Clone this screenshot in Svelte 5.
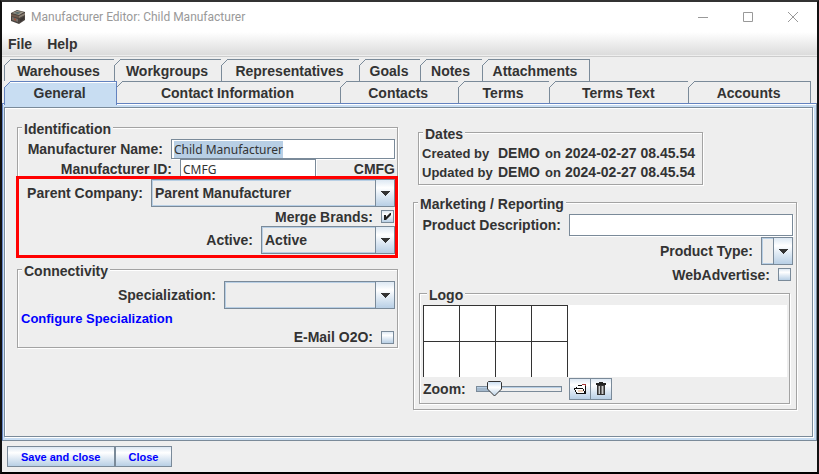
<script lang="ts">
	import { onMount } from 'svelte';

	// Tab rows, sized like the native tabbed pane
	const backTabs = [
		{ label: 'Warehouses', size: 111 },
		{ label: 'Workgroups', size: 107 },
		{ label: 'Representatives', size: 138 },
		{ label: 'Goals', size: 61 },
		{ label: 'Notes', size: 62 },
		{ label: 'Attachments', size: 107 }
	];

	const frontTabs = [
		{ label: 'General', size: 112 },
		{ label: 'Contact Information', size: 226 },
		{ label: 'Contacts', size: 118 },
		{ label: 'Terms', size: 91 },
		{ label: 'Terms Text', size: 139 },
		{ label: 'Accounts', size: 122 }
	];

	const dates = [
		{ action: 'Created by', user: 'DEMO', time: '2024-02-27 08.45.54' },
		{ action: 'Updated by', user: 'DEMO', time: '2024-02-27 08.45.54' }
	];

	let activeTab = $state('General');
	let name = $state('Child Manufacturer');
	let id = $state('CMFG');
	let mergeBrands = $state(true);
	let email = $state(false);
	let webAdvertise = $state(false);
	let description = $state('');
	let zoom = $state(14);
	let nameInput: HTMLInputElement;

	onMount(() => {
		nameInput.focus();
		nameInput.select();
	});
</script>

{#snippet arrow()}
	<span class="arrow">
		<svg width="10" height="5" viewBox="0 0 10 5" shape-rendering="crispEdges"><path d="M0 0H10L5 5Z" fill="#333" /></svg>
	</span>
{/snippet}

<div class="window">
	<header class="titlebar">
		<svg class="app-icon" width="16" height="16" viewBox="0 0 16 16">
			<path d="M1 4L7 1L15 3V11L9 15L1 12Z" fill="#4a4440" />
			<path d="M2 4L7 2L14 3L9 6Z" fill="#a39c8d" />
			<path d="M4 4L7 3L11 3.500L8 5Z" fill="#55696b" />
			<path d="M1 5L9 7V9L1 7Z" fill="#6e5a4c" />
			<path d="M9 7L15 4V6L9 9Z" fill="#8b8175" />
			<path d="M2 8L8 10V13L2 11Z" fill="#756e67" />
			<path d="M10 10L14 8V10L10 13Z" fill="#3b3532" />
			<path d="M4 9L6 10V12L4 11Z" fill="#9b4f3a" />
		</svg>
		<span class="title">Manufacturer Editor: Child Manufacturer</span>
		<div class="window-buttons">
			<button aria-label="Minimize"><svg width="10" height="10" viewBox="0 0 10 10"><path d="M0 5.500H10" /></svg></button>
			<button aria-label="Maximize"><svg width="10" height="10" viewBox="0 0 10 10"><path d="M.5 .5H9.500V9.500H.5Z" /></svg></button>
			<button aria-label="Close window"><svg width="10" height="10" viewBox="0 0 10 10"><path d="M0 0L10 10M10 0L0 10" /></svg></button>
		</div>
	</header>

	<nav class="menubar">
		<button>File</button>
		<button>Help</button>
	</nav>

	<div class="tabs" role="tablist">
		<div class="tab-row">
			{#each backTabs as tab}
				<button class="tab" role="tab" aria-selected={activeTab === tab.label} class:selected={activeTab === tab.label} style="flex-basis: {tab.size}px" onclick={() => (activeTab = tab.label)}>{tab.label}</button>
			{/each}
		</div>
		<div class="tab-row front">
			{#each frontTabs as tab}
				<button class="tab" role="tab" aria-selected={activeTab === tab.label} class:selected={activeTab === tab.label} style="flex-grow: {tab.size}" onclick={() => (activeTab = tab.label)}>{tab.label}</button>
			{/each}
		</div>
	</div>

	<main class="pane">
		<div class="page">
			<div class="column">
				<fieldset>
					<legend>Identification</legend>
					<div class="row name">
						<label for="name">Manufacturer Name:</label>
						<input id="name" type="text" bind:value={name} bind:this={nameInput} />
					</div>
					<div class="row ident">
						<label for="ident">Manufacturer ID:</label>
						<input id="ident" type="text" bind:value={id} />
						<output for="ident">{id}</output>
					</div>
					<div class="highlight">
						<div class="row parent">
							<label for="parent">Parent Company:</label>
							<div class="combo">
								<select id="parent"><option>Parent Manufacturer</option></select>
								{@render arrow()}
							</div>
						</div>
						<div class="row check">
							<label for="merge">Merge Brands:</label>
							<input id="merge" type="checkbox" bind:checked={mergeBrands} />
						</div>
						<div class="row active">
							<label for="active">Active:</label>
							<div class="combo">
								<select id="active"><option>Active</option><option>Inactive</option></select>
								{@render arrow()}
							</div>
						</div>
					</div>
				</fieldset>

				<fieldset class="connectivity">
					<legend>Connectivity</legend>
					<div class="row special">
						<label for="special">Specialization:</label>
						<div class="combo">
							<select id="special"><option></option></select>
							{@render arrow()}
						</div>
					</div>
					<a class="configure" href="#specialization">Configure Specialization</a>
					<div class="row check">
						<label for="email">E-Mail O2O:</label>
						<input id="email" type="checkbox" bind:checked={email} />
					</div>
				</fieldset>
			</div>

			<div class="column">
				<fieldset class="dates">
					<legend>Dates</legend>
					{#each dates as date}
						<div class="date">
							<small>{date.action}</small>
							<span>{date.user}</span>
							<small>on</small>
							<time>{date.time}</time>
						</div>
					{/each}
				</fieldset>

				<fieldset class="marketing">
					<legend>Marketing / Reporting</legend>
					<div class="row description">
						<label for="description">Product Description:</label>
						<input id="description" type="text" bind:value={description} />
					</div>
					<div class="row type">
						<label for="type">Product Type:</label>
						<div class="combo small">
							<select id="type"><option></option></select>
							{@render arrow()}
						</div>
					</div>
					<div class="row check">
						<label for="web">WebAdvertise:</label>
						<input id="web" type="checkbox" bind:checked={webAdvertise} />
					</div>

					<fieldset class="logo">
						<legend>Logo</legend>
						<div class="canvas"><div class="grid"></div></div>
						<div class="tools">
							<label for="zoom">Zoom:</label>
							<input id="zoom" type="range" min="0" max="100" bind:value={zoom} style="--fill: {zoom}%" />
							<div class="tool-buttons">
								<button aria-label="Open logo">
									<svg width="15" height="12" viewBox="0 0 15 12" shape-rendering="crispEdges">
										<path d="M4 2H12V9H4Z" fill="#fff" />
										<path d="M1 5H10L12 10H4Z" fill="#fff" />
										<path d="M5 7H10V9H5Z" fill="#f1d5bd" />
										<path d="M3 4H4V3H5V2H9V3H4V5H3Z" fill="#111" />
										<path d="M1 5H10V6H1ZM1 6H2V7H1ZM2 7H3V9H2ZM3 9H4V10H3ZM3 10H13V11H3ZM10 6H11V8H10ZM11 8H12V10H11ZM12 3H13V11H12Z" fill="#111" />
										<path d="M9 1H13V2H9ZM12 2H13V3H12Z" fill="#a33a3a" />
									</svg>
								</button>
								<button aria-label="Delete logo">
									<svg width="12" height="14" viewBox="0 0 12 14" shape-rendering="crispEdges">
										<path d="M4 0H8V1H11V3H1V1H4Z" fill="#222" />
										<path d="M2 3H10V13H2Z" fill="#333" />
										<path d="M3 4H9V12H3Z" fill="#777" />
										<path d="M4 4H5V12H4ZM7 4H8V12H7Z" fill="#ccc" />
										<path d="M5 4H6V12H5Z" fill="#333" />
									</svg>
								</button>
							</div>
						</div>
					</fieldset>
				</fieldset>
			</div>
		</div>
	</main>

	<footer>
		<button>Save and close</button>
		<button>Close</button>
	</footer>
</div>

<style>
	:global(body) {
		margin: 0;
	}

	.window {
		--line: #7a8a99;
		--metal: linear-gradient(#dde8f3 0%, #fff 30%, #e4edf6 55%, #b8cfe5 100%);
		box-sizing: border-box;
		min-height: 100vh;
		display: flex;
		flex-direction: column;
		background: #eee;
		border: 2px solid #000;
		border-color: #333 #111 #000 #111;
		color: #333;
		font: bold 14px/16px 'Liberation Sans', Arial, sans-serif;
	}

	button,
	input,
	select {
		box-sizing: border-box;
		margin: 0;
		font: inherit;
		color: inherit;
		border-radius: 0;
	}

	/* Title bar and menu */
	.titlebar {
		display: flex;
		align-items: center;
		height: 30px;
		padding: 0 2px 0 8px;
		background: #fff;
	}

	.title {
		flex: 1;
		margin-left: 5px;
		color: #999;
		font: 12px/16px Roboto, sans-serif;
	}

	.window-buttons {
		display: flex;
	}

	.window-buttons button {
		display: flex;
		align-items: center;
		justify-content: center;
		width: 45px;
		height: 28px;
		padding: 0;
		border: none;
		background: none;
	}

	.window-buttons path {
		fill: none;
		stroke: #999;
	}

	.menubar {
		display: flex;
		gap: 15px;
		height: 24px;
		padding: 0 6px;
		background: linear-gradient(#fff, #dadada);
		border-bottom: 1px solid #ccc;
		box-shadow: inset 0 -1px #eee;
	}

	.menubar button {
		padding: 0;
		border: none;
		background: none;
	}

	/* Tabs */
	.tabs {
		padding: 2px 6px 0 2px;
	}

	.tab-row {
		display: flex;
		height: 22px;
	}

	.tab {
		position: relative;
		flex: 0 0 auto;
		min-width: 0;
		padding: 1px 2px 0 0;
		border: solid var(--line);
		border-width: 1px 1px 0 0;
		background: #eee;
		white-space: nowrap;
	}

	.front .tab {
		flex: 1 1 0;
	}

	.tab:first-child {
		border-left-width: 1px;
	}

	/* cut corner */
	.tab::before {
		content: '';
		position: absolute;
		top: -1px;
		left: -1px;
		width: 7px;
		height: 7px;
		background: linear-gradient(135deg, #eee 44%, var(--line) 44%, var(--line) 54%, transparent 54%);
	}

	.tab.selected {
		background: #c8ddf2;
		border-color: #6382bf;
		margin-bottom: -2px;
		padding-bottom: 2px;
		box-shadow: inset 0 1px #fff;
		z-index: 1;
	}

	.tab.selected::before {
		background: linear-gradient(135deg, #eee 44%, #6382bf 44%, #6382bf 54%, transparent 54%);
	}

	.pane {
		flex: 1;
		display: flex;
		padding: 3px 3px 3px 1px;
		background: #c8ddf2;
		border: 1px solid #6382bf;
		border-right-color: var(--line);
		border-bottom-color: var(--line);
		box-shadow: inset 0 1px #fff;
	}

	.page {
		flex: 1;
		display: grid;
		grid-template-columns: minmax(0, 381fr) minmax(0, 384fr);
		gap: 15px;
		align-items: start;
		padding: 9px 15px 18px 12px;
		background: #eee;
		border: 1px solid var(--line);
		box-shadow: 1px 1px #fff, inset 1px 1px #fff;
	}

	/* Titled borders */
	fieldset {
		min-width: 0;
		margin: 0 0 2px;
		padding: 2px 2px 2px 0;
		border: 1px solid #a3a3a3;
		box-shadow: 1px 1px #fff, inset 1px 1px #fff;
	}

	legend {
		margin-left: 4px;
		padding: 4px 2px 0;
		background: #eee;
	}

	.row {
		display: flex;
		align-items: center;
		justify-content: flex-end;
		gap: 8px;
		min-height: 20px;
	}

	.row label {
		flex: none;
		text-align: right;
		white-space: nowrap;
	}

	.name label {
		width: 145px;
	}

	.ident label {
		width: 154px;
	}

	.parent label {
		width: 125px;
	}

	.active label {
		width: 235px;
	}

	.special label {
		width: 198px;
	}

	.description label {
		width: 147px;
	}

	.ident output {
		width: 71px;
		text-align: right;
	}

	input[type='text'] {
		flex: 1;
		min-width: 0;
		height: 20px;
		padding: 0 2px;
		border: 1px solid var(--line);
		background: #fff;
		box-shadow: 1px 1px #fff;
		font: 12px/16px 'Noto Sans', Tahoma, sans-serif;
		outline: none;
	}

	input[type='text']::selection {
		background: #b8cfe5;
		color: #333;
	}

	.description input[type='text'] {
		height: 22px;
	}

	.combo {
		position: relative;
		flex: 1;
		display: flex;
		height: 28px;
	}

	.combo.small {
		flex: none;
		width: 32px;
	}

	select {
		appearance: none;
		width: 100%;
		padding: 0 20px 0 3px;
		border: 1px solid var(--line);
		background: #eee;
		box-shadow: inset 0 0 0 1px #b8cfe5;
		outline: none;
	}

	.arrow {
		position: absolute;
		top: 0;
		right: 0;
		box-sizing: border-box;
		width: 20px;
		height: 100%;
		display: flex;
		align-items: center;
		justify-content: center;
		border: 1px solid var(--line);
		background: var(--metal);
		pointer-events: none;
	}

	.row.check {
		min-height: 19px;
		padding-right: 1px;
	}

	input[type='checkbox'] {
		appearance: none;
		width: 13px;
		height: 13px;
		border: 1px solid var(--line);
		background: var(--metal);
	}

	input[type='checkbox']:checked::before {
		content: '';
		display: block;
		width: 11px;
		height: 11px;
		background: #222;
		clip-path: polygon(2px 4px, 4px 4px, 4px 6px, 8px 2px, 9px 2px, 9px 4px, 4px 9px, 2px 9px);
	}

	.highlight {
		position: relative;
	}

	.highlight::after {
		content: '';
		position: absolute;
		inset: -3px -3px -4px -2px;
		border: 3px solid #f00;
		pointer-events: none;
	}

	.connectivity .row.check {
		min-height: 16px;
	}

	.configure {
		display: block;
		padding-left: 3px;
		color: #00f;
		font-size: 13px;
		line-height: 20px;
		text-decoration: none;
	}

	/* Right column */
	.dates {
		width: 281px;
		margin: 5px 0 7px 5px;
	}

	.date {
		display: grid;
		grid-template-columns: 76px 47px 20px auto;
		padding-left: 3px;
		line-height: 19px;
	}

	small {
		font-size: 13px;
	}

	.marketing {
		margin: 0;
		padding: 2px 3px 5px 0;
	}

	.type {
		margin-top: 1px;
	}

	.marketing > .row.check {
		padding-right: 2px;
	}

	.logo {
		margin: -1px 3px 0 5px;
		padding: 2px 2px 3px 3px;
	}

	.canvas {
		background: #fff;
	}

	.grid {
		width: 145px;
		height: 72px;
		background:
			repeating-linear-gradient(90deg, #333 0 1px, transparent 1px 36px),
			repeating-linear-gradient(#333 0 1px, transparent 1px 36px);
	}

	.tools {
		display: flex;
		align-items: center;
		padding-top: 1px;
	}

	.tools label {
		width: 53px;
	}

	input[type='range'] {
		appearance: none;
		width: 86px;
		height: 16px;
		background: none;
	}

	input[type='range']::-webkit-slider-runnable-track {
		box-sizing: border-box;
		height: 6px;
		border: 1px solid var(--line);
		background: linear-gradient(90deg, #a3b8cc var(--fill), #eee var(--fill));
		box-shadow: inset 0 1px #b8cfe5;
	}

	input[type='range']::-webkit-slider-thumb {
		appearance: none;
		width: 15px;
		height: 16px;
		margin-top: -6px;
		background: url("data:image/svg+xml,%3Csvg xmlns='http://www.w3.org/2000/svg' width='15' height='16'%3E%3Cdefs%3E%3ClinearGradient id='g' x2='0' y2='1'%3E%3Cstop stop-color='%23c8ddf2'/%3E%3Cstop offset='.4' stop-color='white'/%3E%3Cstop offset='1' stop-color='%23b8cfe5'/%3E%3C/linearGradient%3E%3C/defs%3E%3Cpath d='M1.5 .5H13.5L14.5 1.500V8L7.500 15L.5 8V1.500Z' fill='url(%23g)' stroke='%23333'/%3E%3C/svg%3E");
	}

	.tool-buttons {
		display: flex;
		margin-left: 7px;
	}

	.tool-buttons button {
		display: flex;
		align-items: center;
		justify-content: center;
		width: 22px;
		height: 22px;
		padding: 0;
		border: 1px solid var(--line);
		background: var(--metal);
	}

	.tool-buttons button + button {
		margin-left: -1px;
	}

	footer {
		display: flex;
		padding: 5px;
	}

	footer button {
		height: 21px;
		padding: 0 13px;
		border: 1px solid var(--line);
		background: var(--metal);
		color: #00f;
		font-size: 11px;
	}

	footer button + button {
		padding: 0 13px;
	}
</style>
